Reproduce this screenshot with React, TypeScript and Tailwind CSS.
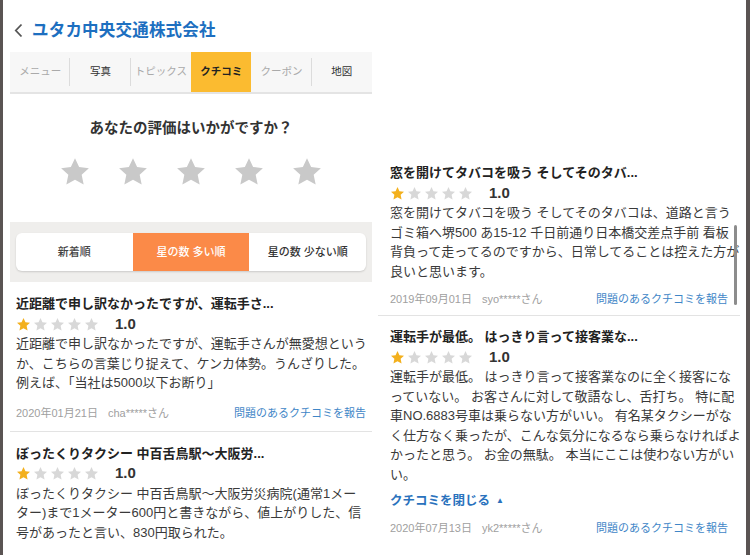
import React from "react";

const STAR_POINTS =
  "12,1.6 15.1,8.2 22.4,9.1 17,14.1 18.5,21.4 12,17.8 5.5,21.4 7,14.1 1.6,9.1 8.9,8.2";

type Review = {
  title: string;
  lines: string[];
  date?: string;
  user?: string;
  closable?: boolean;
};

const LEFT_REVIEWS: Review[] = [
  {
    title: "近距離で申し訳なかったですが、運転手さ...",
    lines: [
      "近距離で申し訳なかったですが、運転手さんが無愛想という",
      "か、こちらの言葉じり捉えて、ケンカ体勢。うんざりした。",
      "例えば、「当社は5000以下お断り」",
    ],
    date: "2020年01月21日",
    user: "cha*****さん",
  },
  {
    title: "ぼったくりタクシー 中百舌鳥駅〜大阪労...",
    lines: [
      "ぼったくりタクシー 中百舌鳥駅〜大阪労災病院(通常1メー",
      "ター)まで1メーター600円と書きながら、値上がりした、信",
      "号があったと言い、830円取られた。",
    ],
  },
];

const RIGHT_REVIEWS: Review[] = [
  {
    title: "窓を開けてタバコを吸う そしてそのタバ...",
    lines: [
      "窓を開けてタバコを吸う そしてそのタバコは、道路と言う",
      "ゴミ箱へ堺500 あ15-12 千日前通り日本橋交差点手前 看板",
      "背負って走ってるのですから、日常してることは控えた方が",
      "良いと思います。",
    ],
    date: "2019年09月01日",
    user: "syo*****さん",
  },
  {
    title: "運転手が最低。 はっきり言って接客業な...",
    lines: [
      "運転手が最低。 はっきり言って接客業なのに全く接客にな",
      "っていない。 お客さんに対して敬語なし、舌打ち。 特に配",
      "車NO.6883号車は乗らない方がいい。 有名某タクシーがな",
      "く仕方なく乗ったが、こんな気分になるなら乗らなければよ",
      "かったと思う。 お金の無駄。 本当にここは使わない方がい",
      "い。",
    ],
    date: "2020年07月13日",
    user: "yk2*****さん",
    closable: true,
  },
];

const TABS = [
  { label: "メニュー", dim: true },
  { label: "写真" },
  { label: "トピックス", dim: true },
  { label: "クチコミ", active: true },
  { label: "クーポン", dim: true },
  { label: "地図" },
];

function Star({ size, color }: { size: number; color: string }) {
  return (
    <svg width={size} height={size} viewBox="0 0 24 24" className="shrink-0">
      <polygon points={STAR_POINTS} fill={color} />
    </svg>
  );
}

function ReviewCard({
  review,
  right,
  last,
}: {
  review: Review;
  right?: boolean;
  last?: boolean;
}) {
  return (
    <div
      className={`${last ? "" : "border-b border-[#e3e3e3]"} ${
        right ? "px-[12px] pt-[11px] pb-[6px]" : "px-[6px] pt-[12px] pb-[7px]"
      }`}
    >
      <div className="text-[13px] leading-[20px] font-bold text-[#222] whitespace-nowrap">
        {review.title}
      </div>
      {/* rating row */}
      <div className="flex items-center h-[20px]">
        <div className="flex gap-[2px]">
          {[0, 1, 2, 3, 4].map((i) => (
            <Star key={i} size={15} color={i === 0 ? "#f3b01d" : "#d8d8d8"} />
          ))}
        </div>
        <span className="ml-[16px] text-[15px] font-bold text-[#333]">1.0</span>
      </div>
      <div className="text-[13px] leading-[19.5px] text-[#3a3a3a]">
        {review.lines.map((line) => (
          <div key={line} className="whitespace-nowrap">
            {line}
          </div>
        ))}
      </div>
      {review.closable && (
        <div className="mt-[7px] h-[20px] flex items-center gap-[6px] text-[12.5px] font-bold text-[#2a72bd]">
          クチコミを閉じる
          <span className="text-[8px] leading-none">▲</span>
        </div>
      )}
      {review.date && (
        <div
          className={`flex items-center justify-between h-[20px] ${
            review.closable ? "mt-[7px]" : right ? "mt-[8px]" : "mt-[11px]"
          }`}
        >
          <div className="flex gap-[10px] text-[11px] text-[#a0a0a0]">
            <span>{review.date}</span>
            <span>{review.user}</span>
          </div>
          <span className="text-[11px] text-[#3f86c7]">問題のあるクチコミを報告</span>
        </div>
      )}
    </div>
  );
}

export default function App() {
  return (
    <div className="flex w-[750px] h-[555px] overflow-hidden bg-white font-['Liberation_Sans','Noto_Sans_CJK_JP',sans-serif]">
      <div className="w-[3px] shrink-0 bg-[#5a5453]" />

      {/* Left screen */}
      <div className="w-[372px] shrink-0 pl-[7px] pr-[3px] flex flex-col">
        <div className="h-[52px] pt-[8px] flex items-center gap-[9px] pl-[4px]">
          <svg width="9" height="15" viewBox="0 0 9 15" className="shrink-0">
            <polyline
              points="7.5,1.5 1.8,7.5 7.5,13.5"
              fill="none"
              stroke="#555"
              strokeWidth="1.8"
            />
          </svg>
          <span className="text-[16.5px] font-bold text-[#1d6fc0] tracking-[0.2px]">
            ユタカ中央交通株式会社
          </span>
        </div>

        {/* Tabs */}
        <div className="h-[42px] flex bg-[#f7f7f7] border-b-2 border-[#e4e4e4]">
          {TABS.map((tab, i) => {
            const next = TABS[i + 1];
            const sep = next && !tab.active && !next.active;
            return (
              <div
                key={tab.label}
                className={`flex-1 relative flex items-center justify-center text-[10.5px] ${
                  tab.active
                    ? "bg-[#fbbb30] font-bold text-[#222]"
                    : tab.dim
                    ? "text-[#aaa]"
                    : "text-[#333]"
                }`}
              >
                {tab.label}
                {sep && (
                  <span className="absolute right-0 top-[6px] bottom-[6px] w-px bg-[#dcdcdc]" />
                )}
              </div>
            );
          })}
        </div>

        <div className="mt-[24px] text-center text-[14.5px] leading-[20px] font-bold text-[#333]">
          あなたの評価はいかがですか？
        </div>
        <div className="mt-[18px] flex justify-center gap-[26px]">
          {[0, 1, 2, 3, 4].map((i) => (
            <Star key={i} size={32} color="#c9c9c9" />
          ))}
        </div>

        {/* Sort selector */}
        <div className="mt-[34px] bg-[#efeeec] pt-[11px] pb-[11px] px-[6px]">
          <div className="h-[38px] flex rounded-[6px] bg-white overflow-hidden shadow-[0_1px_2px_rgba(0,0,0,0.15)] text-[11px] font-medium">
            <div className="flex-1 flex items-center justify-center text-[#444]">新着順</div>
            <div className="flex-1 flex items-center justify-center bg-[#fb8a48] text-white">
              星の数 多い順
            </div>
            <div className="flex-1 flex items-center justify-center text-[#333]">
              星の数 少ない順
            </div>
          </div>
        </div>

        {LEFT_REVIEWS.map((r, i) => (
          <ReviewCard key={r.title} review={r} last={i === LEFT_REVIEWS.length - 1} />
        ))}
      </div>

      {/* Right screen */}
      <div className="relative w-[371px] shrink-0 pl-[3px] pr-[6px] flex flex-col">
        <div className="h-[152px] shrink-0" />
        {RIGHT_REVIEWS.map((r, i) => (
          <ReviewCard
            key={r.title}
            review={r}
            right
            last={i === RIGHT_REVIEWS.length - 1}
          />
        ))}
        <span className="absolute left-[359px] top-[225px] w-[3px] h-[80px] rounded-full bg-[#8c8c8c]" />
      </div>

      <div className="w-[4px] shrink-0 bg-[#5a5453]" />
    </div>
  );
}
